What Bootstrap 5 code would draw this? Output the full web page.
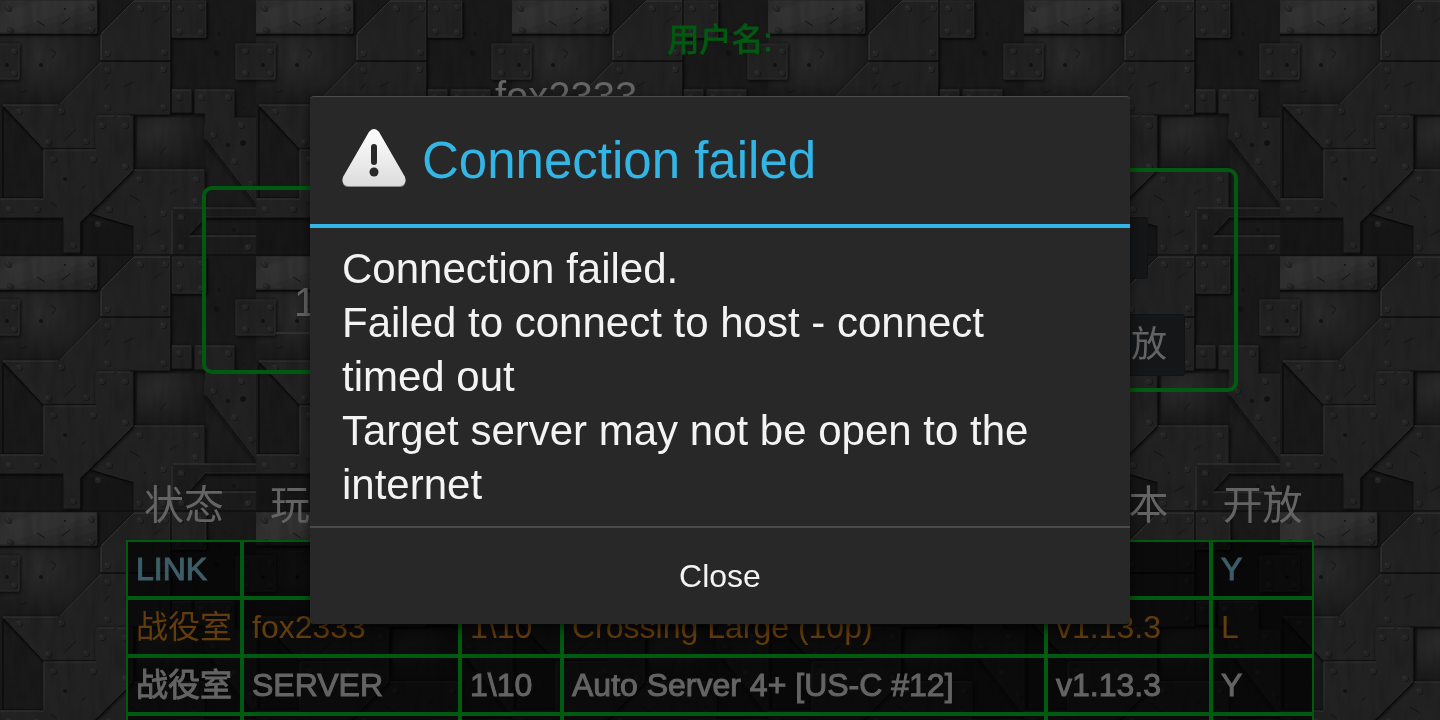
<!DOCTYPE html>
<html lang="zh-CN">
<head>
<meta charset="utf-8">
<meta name="viewport" content="width=device-width, initial-scale=1">
<title>Connection failed</title>
<link rel="stylesheet" href="https://cdn.jsdelivr.net/npm/bootstrap@5.3.0/dist/css/bootstrap.min.css">
<style>
  :root { --line: #005a10; --dim: #646464; }
  body { background: #191919; color: var(--dim); font-family: "Liberation Sans", "Noto Sans CJK SC", sans-serif; }
  .lobby { height: 100vh; padding-top: 16px; }
  .wall { z-index: -1; }
  .heavy { -webkit-text-stroke: 1px currentColor; }
  .user-label { color: var(--line); font-size: 32px; line-height: 48px; }
  .field, .field:focus { background: transparent; border: 0; border-bottom: 2px solid #303030; color: var(--dim); font-size: 40px; line-height: 48px; padding: 0 18px 6px; outline: 0; }
  .user-field { width: 486px; margin-top: 8px; }
  .panels { width: 1036px; margin-top: 40px; }
  .panel { border: 4px solid var(--line); border-radius: 10px; }
  .panel-join { width: 340px; height: 188px; padding: 88px 70px 0; }
  .panel-host { width: 340px; height: 224px; padding: 33px 49px 0 0; gap: 35px; }
  .dark-btn, .dark-btn:hover { height: 62px; background: #141618; border: 1px solid #111214; border-radius: 3px; color: var(--dim); font-size: 36px; line-height: 36px; padding: 0 17px; }
  .dark-btn-map { width: 160px; margin-right: 37px; }
  .rooms { width: 1188px; margin-top: 78px; table-layout: fixed; border-collapse: separate; border-spacing: 0; }
  .rooms th { height: 70px; font-size: 40px; font-weight: 400; text-align: center; line-height: 60px; padding: 0; white-space: nowrap; }
  .rooms .player-head { text-align: left; padding-left: 28px; }
  .rooms td { height: 58px; border: 2px solid var(--line); background: rgba(0, 0, 0, .65); font-size: 32px; line-height: 48px; padding: 0 8px; white-space: nowrap; }
  .row-link { color: #3d5e68; }
  .row-own { color: #633c0c; }
  .modal-dialog { max-width: 820px; }
  .modal-content { background: #282828; color: #f3f3f3; border: 0; border-top: 1px solid #4b4b4b; border-radius: 4px; box-shadow: 0 4px 12px rgba(0, 0, 0, .6); }
  .modal-header { height: 131px; border-bottom: 4px solid #33b5e5; border-radius: 0; padding: 0 32px; gap: 16px; }
  .modal-title { color: #33b5e5; font-size: 51px; line-height: 64px; }
  .modal-body { font-size: 42px; line-height: 54px; padding: 14px 32px; }
  .modal-footer { border-top: 2px solid #4b4b4b; padding: 0; }
  .close-btn, .close-btn:hover { height: 96px; margin: 0; color: #f3f3f3; font-size: 32px; border: 0; }
</style>
</head>
<body>
<svg class="wall position-fixed top-0 start-0 w-100 h-100" aria-hidden="true">
  <defs>
    <filter id="drop" x="-10%" y="-10%" width="125%" height="125%"><feDropShadow dx="1" dy="1" stdDeviation="2" flood-color="#000" flood-opacity=".9"/></filter>
    <filter id="grain" x="0" y="0" width="100%" height="100%"><feTurbulence type="fractalNoise" baseFrequency="0.12 0.03" numOctaves="2" seed="4" stitchTiles="stitch"/><feColorMatrix values="0 0 0 0 0  0 0 0 0 0  0 0 0 0 0  1.4 0 0 0 -0.5"/></filter>
    <linearGradient id="bright" x1="0" x2="1" y1="0" y2="1"><stop offset="0" stop-color="#2c2c2c"/><stop offset=".4" stop-color="#333"/><stop offset="1" stop-color="#222"/></linearGradient>
    <radialGradient id="glow" cx=".4" cy=".3" r=".7"><stop offset="0" stop-color="#2a2a2a"/><stop offset="1" stop-color="#1a1a1a"/></radialGradient>
    <radialGradient id="glow2" cx=".3" cy=".25" r=".8"><stop offset="0" stop-color="#2b2b2b"/><stop offset="1" stop-color="#181818"/></radialGradient>
    <g id="rv"><circle r="3" cx="1" cy="1" fill="#141414" opacity=".8"/><circle r="3" fill="#262626"/><circle r="1" cx="-1" cy="-1" fill="#333"/></g>
    <pattern id="metal" width="256" height="256" patternUnits="userSpaceOnUse">
      <rect width="256" height="256" fill="#191919"/>
      <path d="M0 35H100V62L60 104H0Z" fill="url(#glow)"/>
      <path d="M137 117H206V170H137Z" fill="url(#glow2)"/>
      <path d="M206 140L256 206H206Z" fill="#1b1b1b"/>
      <path d="M3 108L44 150V198H3Z" fill="#191919" stroke="#0f0f0f" stroke-width="1"/>
      <path d="M0 220H64V254H0ZM82 220L134 228V254H82Z" fill="#161616"/>
      <g stroke="#2a2a2a" stroke-width="1">
        <g filter="url(#drop)">
          <path d="M-4 1H97V33H-4Z" fill="url(#bright)"/>
          <path d="M134 1H170V60H101V35Z" fill="#232323"/>
          <path d="M172 1H206V37H172Z" fill="#232323"/>
        </g>
        <g filter="url(#drop)">
          <path d="M101 62H170V114H133L96 116V149H44L3 105H60Z" fill="#212121" stroke="#242424"/>
          <path d="M172 90H191V112H172ZM195 90H234V118H262V214L204 138L206 114H195Z" fill="#202020" stroke="#242424"/>
        </g>
        <g filter="url(#drop)">
          <path d="M134 170H204V208H172V262H134V226L91 213Z" fill="#202020" stroke="#242424"/>
          <path d="M172 208H260V217H205L188 236H260V262H172Z" fill="#1e1e1e" stroke="#242424"/>
        </g>
        <path d="M96 116H133V170L80 222V252H64V217H-4V199H44V150H96Z" fill="#202020" filter="url(#drop)" stroke="#242424"/>
        <g filter="url(#drop)"><path d="M236 44H275V79H236ZM-20 44H19V79H-20Z" fill="#232323"/></g>
      </g>
      <g fill="none" stroke="#080808" stroke-width="1">
        <path d="M0 35H98V1M101 61H171V1M172 39H207V2M171 62V114H205M4 107L43 149H96M134 117V170L90 214L134 227M206 140L256 205M0 219H63M81 222V254M205 219H256M0 255H256M3 107V198"/>
      </g>
      <g fill="none" stroke="#333" stroke-width="1">
        <path d="M101 34L134 1H170M101 62L60 104M3 105H58M134 170H204M44 198V150H96M0 199H44M173 208H256M190 236H256M101 35V60M0 1H96M97 116H130M172 90H191M195 90H234M172 210V254"/>
      </g>
      <g fill="none" stroke="#141414" stroke-width="1">
        <path d="M37 21L45 26M62 24L71 17M50 49L56 53L52 58M18 90L22 93L27 90M104 90L109 84M124 87L133 82M155 22L161 17M64 141L76 129M160 154L166 147M130 195L140 201M170 194L177 189M113 118L117 116M228 25L236 18M188 79L194 74M241 110L248 105M150 236L160 230M50 202L57 207M39 236L46 230M82 188L86 185"/>
      </g>
      <g fill="#121212"><circle cx="217" cy="53" r="3"/><circle cx="219" cy="34" r="2"/><circle cx="65" cy="9" r="1"/><circle cx="41" cy="65" r="2"/><circle cx="65" cy="179" r="2"/><circle cx="243" cy="143" r="3"/><circle cx="228" cy="145" r="2"/><circle cx="145" cy="217" r="1"/><circle cx="234" cy="230" r="2"/><circle cx="7" cy="65" r="2"/></g>
      <use href="#rv" x="8" y="8"/><use href="#rv" x="10" y="30"/><use href="#rv" x="91" y="7"/><use href="#rv" x="91" y="29"/>
      <use href="#rv" x="140" y="8"/><use href="#rv" x="165" y="8"/><use href="#rv" x="107" y="53"/><use href="#rv" x="164" y="52"/>
      <use href="#rv" x="180" y="8"/><use href="#rv" x="201" y="7"/><use href="#rv" x="179" y="31"/><use href="#rv" x="201" y="32"/>
      <use href="#rv" x="107" y="70"/><use href="#rv" x="163" y="69"/><use href="#rv" x="107" y="107"/><use href="#rv" x="163" y="107"/>
      <use href="#rv" x="19" y="111"/><use href="#rv" x="61" y="111"/><use href="#rv" x="48" y="142"/><use href="#rv" x="86" y="141"/>
      <use href="#rv" x="102" y="125"/><use href="#rv" x="125" y="125"/><use href="#rv" x="125" y="166"/><use href="#rv" x="53" y="159"/><use href="#rv" x="93" y="159"/>
      <use href="#rv" x="9" y="209"/><use href="#rv" x="37" y="209"/><use href="#rv" x="73" y="245"/><use href="#rv" x="109" y="209"/><use href="#rv" x="98" y="224"/>
      <use href="#rv" x="139" y="179"/><use href="#rv" x="196" y="179"/><use href="#rv" x="195" y="201"/><use href="#rv" x="163" y="213"/><use href="#rv" x="139" y="247"/><use href="#rv" x="163" y="247"/>
      <use href="#rv" x="181" y="217"/><use href="#rv" x="181" y="247"/><use href="#rv" x="248" y="247"/>
      <use href="#rv" x="179" y="97"/><use href="#rv" x="201" y="97"/><use href="#rv" x="228" y="97"/><use href="#rv" x="241" y="125"/><use href="#rv" x="213" y="135"/><use href="#rv" x="234" y="161"/><use href="#rv" x="251" y="183"/>
      <use href="#rv" x="245" y="51"/><use href="#rv" x="245" y="73"/><use href="#rv" x="14" y="51"/><use href="#rv" x="14" y="73"/>
      <rect width="256" height="256" filter="url(#grain)" opacity=".2"/>
    </pattern>
  </defs>
  <rect width="100%" height="100%" fill="url(#metal)"/>
</svg>

<main class="lobby overflow-hidden d-flex flex-column align-items-center">
  <label class="user-label heavy" for="user">用户名:</label>
  <input class="field user-field" id="user" type="text" value="fox2333">

  <div class="panels d-flex flex-shrink-0 justify-content-between align-items-center">
    <section class="panel panel-join"><input class="field w-100" type="text" value="1" aria-label="1"></section>
    <section class="panel panel-host d-flex flex-column justify-content-center align-items-end">
      <button class="btn dark-btn dark-btn-map" type="button" aria-label="地图"></button>
      <button class="btn dark-btn" type="button">开放</button>
    </section>
  </div>

  <table class="rooms flex-shrink-0">
    <colgroup><col style="width:116px"><col style="width:218px"><col style="width:102px"><col style="width:484px"><col style="width:165px"><col style="width:103px"></colgroup>
    <thead><tr><th>状态</th><th class="player-head">玩</th><th></th><th></th><th>版本</th><th>开放</th></tr></thead>
    <tbody>
      <tr class="row-link heavy"><td>LINK</td><td></td><td></td><td></td><td></td><td>Y</td></tr>
      <tr class="row-own"><td>战役室</td><td>fox2333</td><td>1\10</td><td>Crossing Large (10p)</td><td>v1.13.3</td><td>L</td></tr>
      <tr class="heavy"><td>战役室</td><td>SERVER</td><td>1\10</td><td>Auto Server 4+ [US-C #12]</td><td>v1.13.3</td><td>Y</td></tr>
      <tr><td></td><td></td><td></td><td></td><td></td><td></td></tr>
    </tbody>
  </table>
</main>

<div class="modal show d-block" role="dialog" aria-modal="true" aria-labelledby="dlgTitle">
  <div class="modal-dialog modal-dialog-centered">
    <div class="modal-content">
      <div class="modal-header justify-content-start">
        <svg width="64" height="64" viewBox="0 3 64 64" aria-hidden="true">
          <defs><linearGradient id="tri" x1="0" x2="0" y1="0" y2="1"><stop offset="0" stop-color="#fff"/><stop offset="1" stop-color="#dcdcdc"/></linearGradient></defs>
          <path d="M27 6Q32 0 37 6L63 52Q65 60 58 61H6Q-1 60 1 52Z" fill="#8c8c8c"/>
          <path d="M27 6Q32 0 37 6L63 51Q65 59 58 60H6Q-1 59 1 51Z" fill="url(#tri)"/>
          <rect x="29" y="18" width="6" height="21" rx="3" fill="#282828"/><circle cx="32" cy="46" r="4.5" fill="#282828"/>
        </svg>
        <h1 class="modal-title fw-normal" id="dlgTitle">Connection failed</h1>
      </div>
      <div class="modal-body">Connection failed.<br>Failed to connect to host - connect<br>timed out<br>Target server may not be open to the<br>internet</div>
      <div class="modal-footer"><button class="btn close-btn w-100" type="button">Close</button></div>
    </div>
  </div>
</div>
<script src="https://cdn.jsdelivr.net/npm/bootstrap@5.3.0/dist/js/bootstrap.bundle.min.js"></script>
</body>
</html>
